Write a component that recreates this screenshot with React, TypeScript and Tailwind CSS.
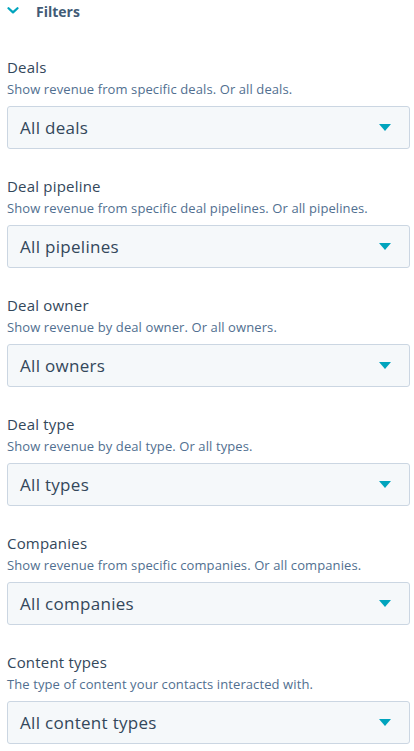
interface FilterField {
  label: string;
  help: string;
  value: string;
}

const fields: FilterField[] = [
  { label: 'Deals', help: 'Show revenue from specific deals. Or all deals.', value: 'All deals' },
  { label: 'Deal pipeline', help: 'Show revenue from specific deal pipelines. Or all pipelines.', value: 'All pipelines' },
  { label: 'Deal owner', help: 'Show revenue by deal owner. Or all owners.', value: 'All owners' },
  { label: 'Deal type', help: 'Show revenue by deal type. Or all types.', value: 'All types' },
  { label: 'Companies', help: 'Show revenue from specific companies. Or all companies.', value: 'All companies' },
  { label: 'Content types', help: 'The type of content your contacts interacted with.', value: 'All content types' },
];

function FilterSelect({ field }: { field: FilterField }) {
  return (
    <div className="flex flex-col">
      <label className="h-[20px] leading-[20px] text-[15px] tracking-[0.2px] text-[#33475b]">{field.label}</label>
      <p className="mt-[4px] h-[16px] leading-[16px] text-[13px] tracking-[0.1px] text-[#516f90]">{field.help}</p>
      <button
        type="button"
        className="mt-[9px] h-[43px] w-full flex items-center justify-between pl-[12px] pr-[18px] bg-[#f5f8fa] border border-[#cbd6e2] rounded-[3px] text-left"
      >
        <span className="text-[17px] tracking-[0.3px] text-[#33475b]">{field.value}</span>
        <svg width="12" height="7" viewBox="0 0 12 7">
          <path d="M0 0h12L6 7z" fill="#00a4bd" />
        </svg>
      </button>
    </div>
  );
}

export default function App() {
  return (
    <div className="w-[414px] h-[751px] bg-white overflow-hidden font-['Open_Sans',sans-serif]">
      <div className="flex items-center h-[22px] pl-[7px]">
        <svg width="12" height="7" viewBox="0 0 12 7" className="mb-[2px]">
          <path d="M1.5 1.2L6 5.4l4.5-4.2" fill="none" stroke="#00a4bd" strokeWidth="2.2" strokeLinecap="round" strokeLinejoin="round" />
        </svg>
        <span className="ml-[17px] text-[14px] font-bold text-[#425b76]">Filters</span>
      </div>
      <div className="flex flex-col gap-[27px] pt-[35px] pl-[7px] pr-[4px]">
        {fields.map((f) => (
          <FilterSelect key={f.label} field={f} />
        ))}
      </div>
    </div>
  );
}
